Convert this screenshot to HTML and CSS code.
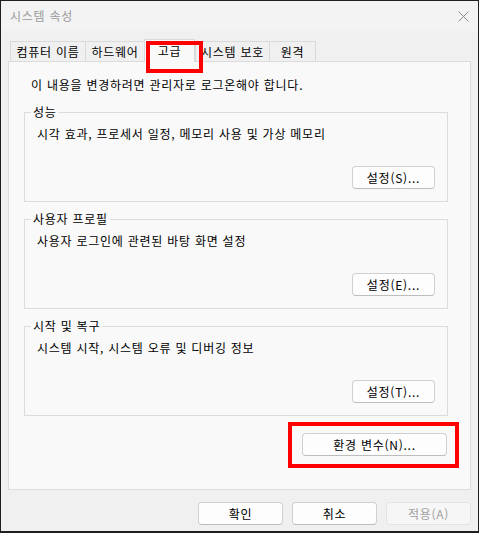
FILE: index.html
```html
<!DOCTYPE html>
<html lang="ko">
<head>
  <meta charset="UTF-8" />
  <title>시스템 속성</title>
  <link rel="stylesheet" href="styles.css">
</head>
<body>
  <div class="window">
    <div class="titlebar">
      <span class="title">시스템 속성</span>
      <svg class="close" width="11" height="11" viewBox="0 0 11 11">
        <path d="M0.5 0.5 L10.5 10.5 M10.5 0.5 L0.5 10.5" stroke="#8a8a8a" stroke-width="1" fill="none" />
      </svg>
    </div>

    <div class="content">
      <div class="tabs">
        <div class="tab tab-name">컴퓨터 이름</div>
        <div class="tab tab-hw">하드웨어</div>
        <div class="tab active">고급</div>
        <div class="tab tab-protect">시스템 보호</div>
        <div class="tab tab-remote">원격</div>
      </div>

      <div class="panel">
        <p class="notice">이 내용을 변경하려면 관리자로 로그온해야 합니다.</p>

        <fieldset class="group">
          <legend>성능</legend>
          <p class="desc">시각 효과, 프로세서 일정, 메모리 사용 및 가상 메모리</p>
          <button class="btn">설정(S)...</button>
        </fieldset>

        <fieldset class="group">
          <legend>사용자 프로필</legend>
          <p class="desc">사용자 로그인에 관련된 바탕 화면 설정</p>
          <button class="btn">설정(E)...</button>
        </fieldset>

        <fieldset class="group">
          <legend>시작 및 복구</legend>
          <p class="desc">시스템 시작, 시스템 오류 및 디버깅 정보</p>
          <button class="btn">설정(T)...</button>
        </fieldset>

        <div class="env-row">
          <button class="btn btn-env">환경 변수(N)...</button>
        </div>
      </div>

      <div class="footer">
        <button class="btn">확인</button>
        <button class="btn">취소</button>
        <button class="btn" disabled>적용(A)</button>
      </div>
    </div>
  </div>
</body>
</html>
```

FILE: styles.css
```css
* {
  box-sizing: border-box;
}
html, body {
  margin: 0;
}
body {
  background-color: #1f1f1f;
  font-family: "Noto Sans CJK KR", "Noto Sans", sans-serif;
  font-size: 12px;
  line-height: 16px;
  letter-spacing: 0.75px;
  color: #000;
  height: 533px;
  overflow: hidden;
}
.window {
  margin: 1px 0 0 1px;
  width: 477px;
  height: 530px;
  background-color: #f0f0f0;
  display: flex;
  flex-direction: column;
}
.titlebar {
  height: 30px;
  background-color: #f3f3f3;
  display: flex;
  align-items: center;
  justify-content: space-between;
  padding: 0 9px;
}
.title {
  color: #9a9a9a;
}
.close {
  display: block;
}
.content {
  flex: 1;
  padding: 10px 7px 0 7px;
}

/* tabs */
.tabs {
  display: flex;
  align-items: flex-end;
  height: 20px;
  padding-left: 2px;
}
.tab {
  height: 20px;
  line-height: 19px;
  padding: 0;
  text-align: center;
  border: 1px solid #dadada;
  border-bottom: none;
  background-color: #f0f0f0;
  margin-right: -1px;
  white-space: nowrap;
}
.tab-name { width: 76px; }
.tab-hw { width: 60px; }
.tab-protect { width: 75px; }
.tab-remote { width: 47px; }
.tab.active {
  position: relative;
  z-index: 1;
  width: 51px;
  height: 23px;
  line-height: 21px;
  margin: 0 0 -1px 0;
  background-color: #f9f9f9;
}
/* red highlight box */
.tab.active::after {
  content: "";
  position: absolute;
  left: 1px;
  top: 1px;
  width: 49px;
  height: 24px;
  border: 4px solid #ff0000;
}

/* panel */
.panel {
  height: 429px;
  border: 1px solid #dcdcdc;
  background-color: #f9f9f9;
  padding: 15px 21px 0 15px;
}
.notice {
  margin: 0 0 12px 7px;
}
.group {
  width: 424px;
  min-width: 0;
  margin: 0 0 10px 0;
  padding: 7px 12px 12px 12px;
  border: 1px solid #dcdcdc;
}
.group legend {
  margin-left: -6px;
  padding: 0 2px;
  line-height: 14px;
}
.desc {
  margin: 0;
}
.group .btn {
  display: block;
  margin: 24px 0 0 auto;
}

.btn {
  width: 83px;
  height: 23px;
  padding: 0;
  font-family: inherit;
  font-size: 12px;
  letter-spacing: 0.75px;
  line-height: 21px;
  color: #000;
  background-color: #fdfdfd;
  border: 1px solid #d0d0d0;
  border-bottom-color: #bdbdbd;
  border-radius: 4px;
}
.btn:disabled {
  color: #a0a0a0;
  background-color: #f6f6f6;
  border-color: #e3e3e3;
}

.env-row {
  display: flex;
  justify-content: flex-end;
  margin-top: 17px;
  padding-right: 2px;
}
.btn-env {
  position: relative;
  width: 145px;
}
.btn-env::after {
  content: "";
  position: absolute;
  left: -15px;
  top: -12px;
  right: -13px;
  bottom: -13px;
  border: 4px solid #ff0000;
}

.footer {
  display: flex;
  justify-content: flex-end;
  gap: 9px;
  margin-top: 12px;
}
.footer .btn {
  width: 85px;
}
```
